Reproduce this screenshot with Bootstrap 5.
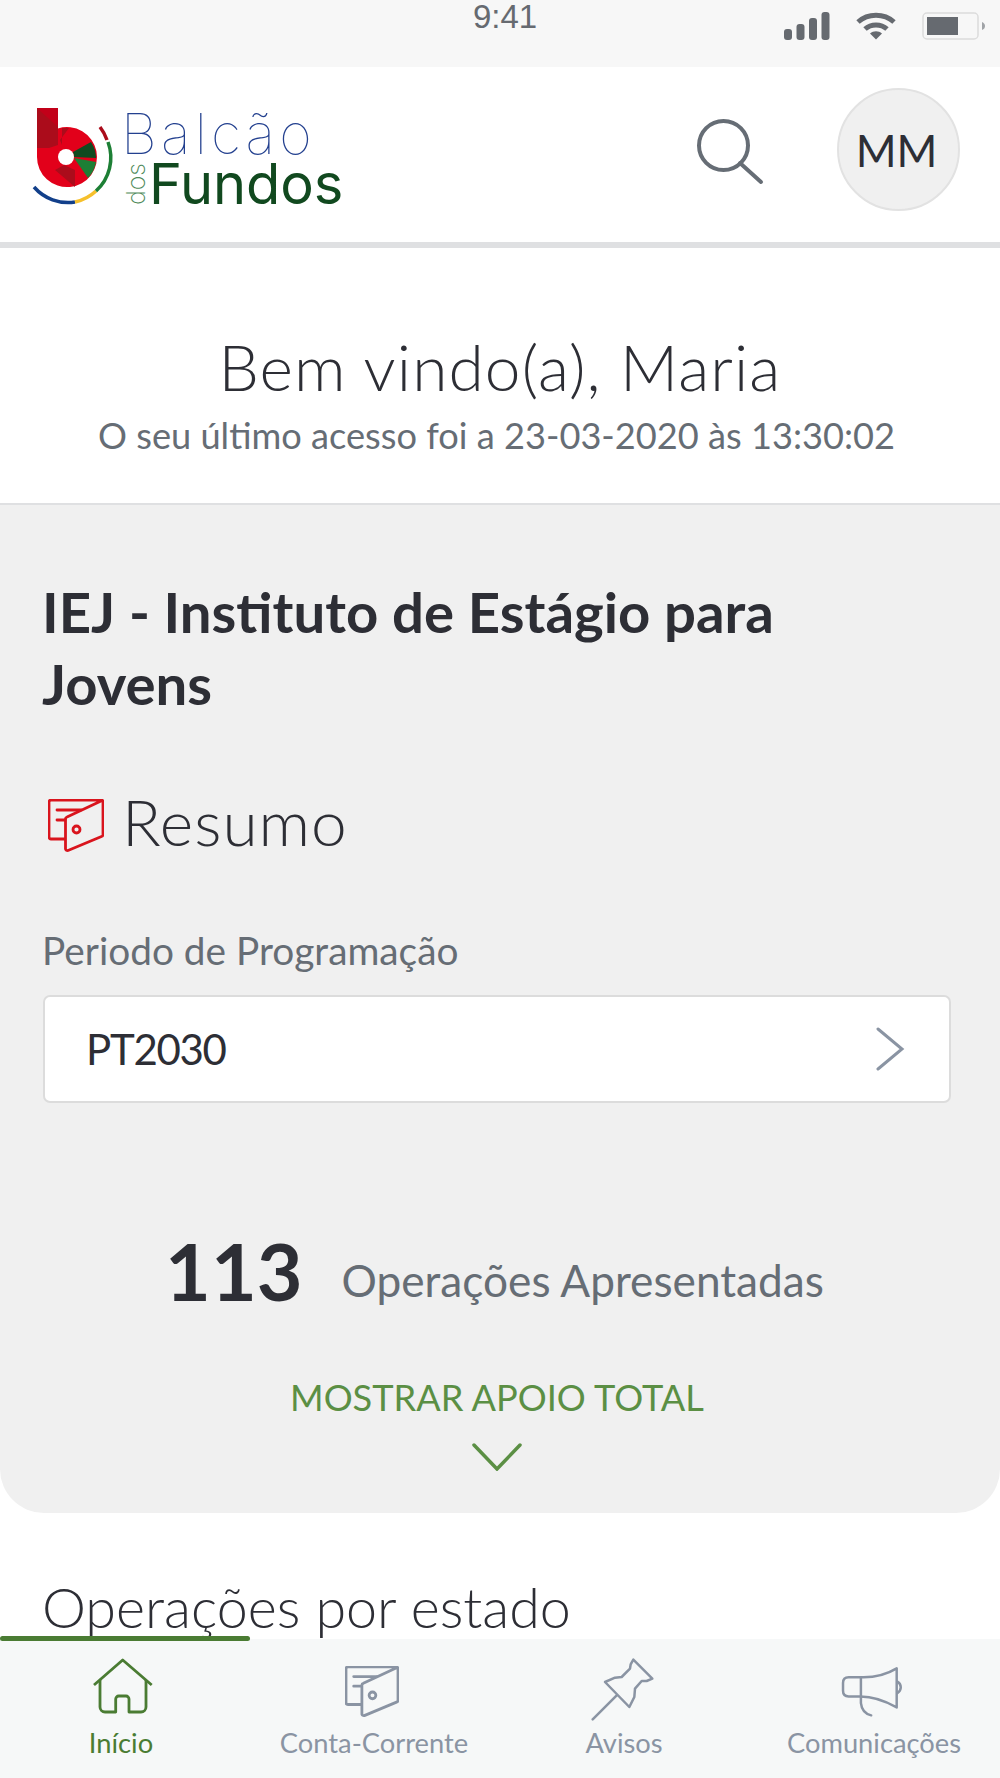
<!DOCTYPE html>
<html lang="pt">
<head>
<meta charset="utf-8">
<title>Balcão dos Fundos</title>
<link href="https://cdn.jsdelivr.net/npm/bootstrap@5.3.0/dist/css/bootstrap.min.css" rel="stylesheet">
<style>
html,body{height:1778px;overflow:hidden;}
body{font-family:"Lato","Liberation Sans",sans-serif;background:#fff;color:#2d2e35;}
.phone{position:relative;height:1778px;overflow:hidden;}
.statusbar{height:67px;background:#f7f7f7;display:grid;grid-template-columns:1fr auto 1fr;color:#666a70;}
.clock{font-family:"Liberation Sans",sans-serif;font-size:33px;line-height:34px;margin-left:10px;}
.status-icons{padding:12px 14px 0 0;gap:26px;}
.topbar{height:181px;border-bottom:6px solid #dfe0e2;padding:0 40px 10px 30px;}
.brand-mark{display:block;width:90px;height:110px;margin-top:11px;flex:none;}
.brand-text{margin-left:5px;margin-top:19px;}
.brand-1{font-family:"Inter",sans-serif;font-weight:100;font-size:56px;line-height:50px;color:#23408f;letter-spacing:4.200px;margin-left:-4px;}
.brand-2{line-height:50px;}
.brand-dos{font-family:"Inter",sans-serif;font-weight:200;font-size:25px;line-height:22px;color:#4f8a5a;writing-mode:vertical-rl;transform:rotate(180deg);margin-right:2px;}
.brand-fundos{font-family:"Inter",sans-serif;font-weight:400;font-size:56px;line-height:50px;color:#11491f;letter-spacing:-.1px;}
.search-ico{margin-top:5px;}
.avatar{width:123px;height:123px;border-radius:50%;background:#f0f0f0;border:2px solid #e2e2e2;font-size:44px;margin-left:73px;padding-right:4px;}
.welcome{padding:79px 0 45px;text-align:center;border-bottom:2px solid #dfe0e2;}
.welcome h1{font-size:64px;font-weight:300;line-height:80px;margin:0;letter-spacing:1.1px;}
.welcome p{font-size:36.200px;line-height:46px;margin:5px 0 0;padding-right:7px;color:#666d75;}
.summary{background:#f0f0f0;border-radius:0 0 44px 44px;padding:70px 49px 0 43px;height:1008px;}
.org{font-size:56.300px;font-weight:700;line-height:72px;margin:0 0 0 -1px;max-width:780px;}
.resumo{margin-top:63px;gap:18px;padding-left:5px;}
.resumo svg{margin-top:8px;}
.resumo h2{font-size:64px;font-weight:300;line-height:80px;margin:0;letter-spacing:1px;}
.field-label{font-size:38.800px;line-height:50px;margin-top:63px;color:#666d75;margin-left:-1px;}
.picker{height:108px;margin-top:20px;background:#fff;border:2px solid #dcdcdc;border-radius:7px;padding:0 44px 0 41px;font-size:42px;letter-spacing:-1.3px;}
.counter{margin-top:123px;height:90px;gap:39px;padding-right:5px;}
.counter b{font-size:79px;font-weight:700;line-height:90px;}
.counter span{font-size:44.200px;color:#666d75;position:relative;top:9px;}
.more{color:#5b8f44;font-size:36.200px;line-height:44px;margin-top:59px;text-align:center;}
.more svg{display:block;margin:24px auto 0;}
.section-title{font-size:55.600px;font-weight:300;line-height:70px;margin:59px 0 0 42px;}
.tabbar{position:absolute;left:0;right:0;bottom:0;height:139px;background:#f6f8f8;}
.tab-progress{position:absolute;left:0;top:-3px;width:250px;height:5px;background:#4a7c33;border-radius:3px;}
.tab{height:139px;font-size:27.300px;line-height:32px;color:#8a94a3;padding-right:2px;}
.tab-on{color:#4a7c33;}
.tab-on span{margin-right:6px;}
.tab-icon{height:88px;}
.i-home{margin:19px 2px 0 0;}
.i-wallet{margin:27px 4px 0 0;}
.i-pin{margin:18px 3px 0 0;}
.i-mega{margin:26px 1px 0 0;}
</style>
</head>
<body>
<div class="phone">
  <div class="statusbar">
    <div></div>
    <div class="clock">9:41</div>
    <div class="status-icons d-flex justify-content-end align-items-start">
      <svg width="46" height="28" viewBox="0 0 46 28" fill="#666a70"><rect x="0" y="17" width="8" height="11" rx="3"/><rect x="12.500" y="12" width="8" height="16" rx="3"/><rect x="25" y="6" width="8" height="22" rx="3"/><rect x="37.500" y="0" width="8" height="28" rx="3"/></svg>
      <svg width="40" height="28" viewBox="0 0 40 28" fill="none" stroke="#666a70" stroke-width="5"><path d="M2 10C12 1 28 1 38 10"/><path d="M9 17C15 11.500 25 11.500 31 17"/><path d="M14 21.500L20 27.500L26 21.500C22.500 18.500 17.500 18.500 14 21.500Z" fill="#666a70" stroke="none"/></svg>
      <svg width="64" height="28" viewBox="0 0 64 28"><rect x="1" y="1" width="55" height="26" rx="4" fill="none" stroke="#dcdcdc" stroke-width="1.500"/><rect x="5" y="5" width="31" height="18" fill="#666a70"/><path d="M60 10C62 11 63 12 63 14C63 16 62 17 60 18Z" fill="#a0a3a7"/></svg>
    </div>
  </div>

  <header class="topbar d-flex align-items-center">
    <svg class="brand-mark" viewBox="30 100 90 110">
      <path d="M37 108H58V128.500A30 30 0 1 1 37 157Z" fill="#e2001a"/>
      <path d="M37 108H58V145L49 148H37Z" fill="#ab0c1b"/>
      <path d="M37 108H58V127Z" fill="#c20019"/>
      <path d="M75 187L75 170L64 165L55 170Z" fill="#ab0c1b"/>
      <path d="M62 128L69 128L60 140L62 145Z" fill="#ab0c1b"/>
      <path d="M73 152L91 142A30 30 0 0 1 96 158L74 157Z" fill="#114a20"/>
      <path d="M74 158L96 162A30 30 0 0 1 88 178Z" fill="#1d7f35"/>
      <circle cx="66" cy="157" r="8" fill="#fff"/>
      <path d="M34 187A45 45 0 0 0 75 202" fill="none" stroke="#123f8a" stroke-width="3.500"/>
      <path d="M75 202A45 45 0 0 0 96 191" fill="none" stroke="#f6c02c" stroke-width="3.500"/>
      <path d="M96 191A45 45 0 0 0 108 142" fill="none" stroke="#1d7f35" stroke-width="3.500"/>
      <path d="M107 140A45 45 0 0 0 100 127" fill="none" stroke="#ab0c1b" stroke-width="3.500"/>
    </svg>
    <div class="brand-text flex-grow-1">
      <div class="brand-1">Balcão</div>
      <div class="brand-2 d-flex align-items-center"><span class="brand-dos">dos</span><span class="brand-fundos">Fundos</span></div>
    </div>
    <svg class="search-ico" width="67" height="66" viewBox="0 0 67 66" fill="none" stroke="#666d75" stroke-width="4" stroke-linecap="round"><circle cx="26.500" cy="26.500" r="24.500"/><path d="M43 44L64 63"/></svg>
    <div class="avatar d-flex align-items-center justify-content-center">MM</div>
  </header>

  <section class="welcome">
    <h1>Bem vindo(a), Maria</h1>
    <p>O seu último acesso foi a 23-03-2020 às 13:30:02</p>
  </section>

  <section class="summary">
    <h2 class="org">IEJ - Instituto de Estágio para Jovens</h2>
    <div class="resumo d-flex align-items-center">
      <svg width="56" height="54" viewBox="0 0 56 54" fill="none" stroke="#d9141d" stroke-width="2.800" stroke-linejoin="round" stroke-linecap="round"><path d="M17 40H3A2 2 0 0 1 1 38V3A2 2 0 0 1 3 1H53A2 2 0 0 1 55 3V36A2 2 0 0 1 53.500 37.500L20 51.500A2 2 0 0 1 17.500 50V20A2 2 0 0 1 19 18L53 2"/><path d="M9 11H33M9 21H17"/><circle cx="28.500" cy="30.500" r="3.500"/></svg>
      <h2>Resumo</h2>
    </div>
    <div class="field-label">Periodo de Programação</div>
    <div class="picker d-flex align-items-center justify-content-between">
      <span>PT2030</span>
      <svg width="30" height="44" viewBox="0 0 30 44" fill="none" stroke="#8a94a3" stroke-width="3" stroke-linecap="round"><path d="M3 2L27 22L3 42"/></svg>
    </div>
    <div class="counter d-flex align-items-center justify-content-center"><b>113</b><span>Operações Apresentadas</span></div>
    <div class="more">MOSTRAR APOIO TOTAL
      <svg width="50" height="28" viewBox="0 0 50 28" fill="none" stroke="#5b8f44" stroke-width="3.500" stroke-linecap="round"><path d="M2 2L25 26L48 2"/></svg>
    </div>
  </section>

  <h2 class="section-title">Operações por estado</h2>

  <nav class="tabbar">
    <div class="tab-progress"></div>
    <div class="row g-0">
      <div class="col-3 tab tab-on d-flex flex-column align-items-center">
        <div class="tab-icon"><svg class="i-home" width="62" height="57" viewBox="0 0 62 57" fill="none" stroke="#4a7c33" stroke-width="2.800" stroke-linejoin="round"><path d="M2 27L30.700 2L59.700 27"/><path d="M8 22V49A5 5 0 0 0 13 54H23.700V41A3 3 0 0 1 26.700 38H34A3 3 0 0 1 37 41V54H49A5 5 0 0 0 54 49V22"/></svg></div>
        <span>Início</span>
      </div>
      <div class="col-3 tab d-flex flex-column align-items-center">
        <div class="tab-icon"><svg class="i-wallet" width="54" height="52" viewBox="0 0 56 54" fill="none" stroke="#8a94a3" stroke-width="2.900" stroke-linejoin="round" stroke-linecap="round"><path d="M17 40H3A2 2 0 0 1 1 38V3A2 2 0 0 1 3 1H53A2 2 0 0 1 55 3V36A2 2 0 0 1 53.500 37.500L20 51.500A2 2 0 0 1 17.500 50V20A2 2 0 0 1 19 18L53 2"/><path d="M9 11H33M9 21H17"/><circle cx="28.500" cy="30.500" r="3.500"/></svg></div>
        <span>Conta-Corrente</span>
      </div>
      <div class="col-3 tab d-flex flex-column align-items-center">
        <div class="tab-icon"><svg class="i-pin" width="65" height="65" viewBox="270 290 195 195" fill="none" stroke="#8a94a3" stroke-width="7.500" stroke-linejoin="round" stroke-linecap="round"><path d="M278 477L350 405"/><path d="M400 298L457 355L440 362L425 362L405 385L403 410L388 440L315 365L345 352L365 350L390 325L392 312Z"/></svg></div>
        <span>Avisos</span>
      </div>
      <div class="col-3 tab d-flex flex-column align-items-center">
        <div class="tab-icon"><svg class="i-mega" width="67" height="53" viewBox="1020 315 200 160" fill="none" stroke="#8a94a3" stroke-width="7.500" stroke-linejoin="round" stroke-linecap="round"><path d="M1190 325V443C1150 420 1110 410 1080 410H1045Q1028 410 1028 393V369Q1028 352 1045 352H1090C1130 352 1165 340 1190 325Z"/><path d="M1082 352V430Q1085 460 1113 467"/><path d="M1192 365A20 20 0 0 1 1192 400"/></svg></div>
        <span>Comunicações</span>
      </div>
    </div>
  </nav>
</div>
<script src="https://cdn.jsdelivr.net/npm/bootstrap@5.3.0/dist/js/bootstrap.bundle.min.js"></script>
</body>
</html>
